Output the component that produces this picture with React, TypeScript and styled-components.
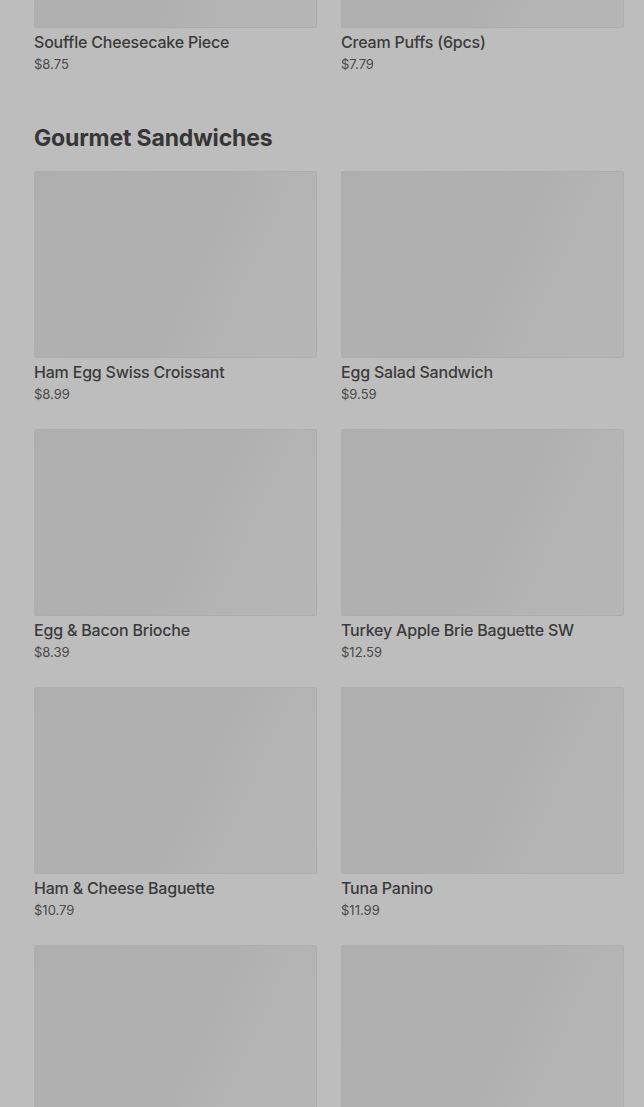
import React, {FC} from "react";
import styled, {createGlobalStyle} from "styled-components";

interface Item {
  name: string;
  price: string;
}

const pastry: Item[] = [
  {name: "Souffle Cheesecake Piece", price: "$8.75"},
  {name: "Cream Puffs (6pcs)", price: "$7.79"},
];

const sandwiches: Item[] = [
  {name: "Ham Egg Swiss Croissant", price: "$8.99"},
  {name: "Egg Salad Sandwich", price: "$9.59"},
  {name: "Egg & Bacon Brioche", price: "$8.39"},
  {name: "Turkey Apple Brie Baguette SW", price: "$12.59"},
  {name: "Ham & Cheese Baguette", price: "$10.79"},
  {name: "Tuna Panino", price: "$11.99"},
  {name: "", price: ""},
  {name: "", price: ""},
];

const GlobalStyle = createGlobalStyle`
  html, body {
    margin: 0;
    padding: 0;
    background: #bdbdbd;
    overflow: hidden;
  }
  body {
    font-family: Inter, "Noto Sans", sans-serif;
    color: #3b3b3b;
  }
`;

const ProductCard: FC<{item: Item}> = ({item}) => (
  <Card>
    <Thumb/>
    <Name>{item.name}</Name>
    <Price>{item.price}</Price>
  </Card>
);

export default function App() {
  return (
    <Page>
      <GlobalStyle/>
      <Section $offset={-159}>
        <Grid>
          {pastry.map((p) => <ProductCard key={p.name} item={p}/>)}
        </Grid>
      </Section>
      <Section>
        <Heading>Gourmet Sandwiches</Heading>
        <Grid>
          {sandwiches.map((p, i) => <ProductCard key={i} item={p}/>)}
        </Grid>
      </Section>
    </Page>
  );
}

const Page = styled.main`
  padding: 0 20px 0 34px;
  height: 1107px;
  overflow: hidden;
`;

const Section = styled.section<{$offset?: number}>`
  margin-top: ${({$offset}) => $offset ?? 50}px;
`;

const Heading = styled.h2`
  margin: 0 0 19px;
  font-size: 23px;
  line-height: 28px;
  font-weight: 700;
  letter-spacing: -0.15px;
  color: #363636;
`;

const Grid = styled.div`
  display: grid;
  grid-template-columns: 1fr 1fr;
  column-gap: 24px;
  row-gap: 25px;
`;

const Card = styled.article`
  display: flex;
  flex-direction: column;
`;

const Thumb = styled.div`
  height: 187px;
  box-sizing: border-box;
  border: 1px solid #adadad;
  border-radius: 2px;
  background: linear-gradient(115deg, #afafaf 0%, #b0b0b0 55%, #b4b4b4 75%, #b6b6b6 100%);
`;

const Name = styled.div`
  margin-top: 2px;
  font-size: 16px;
  line-height: 24px;
  font-weight: 500;
  letter-spacing: -0.2px;
  color: #3b3b3b;
  min-height: 24px;
`;

const Price = styled.div`
  padding-top: 1px;
  font-size: 13px;
  line-height: 19px;
  color: #4a4a4a;
  min-height: 19px;
`;
